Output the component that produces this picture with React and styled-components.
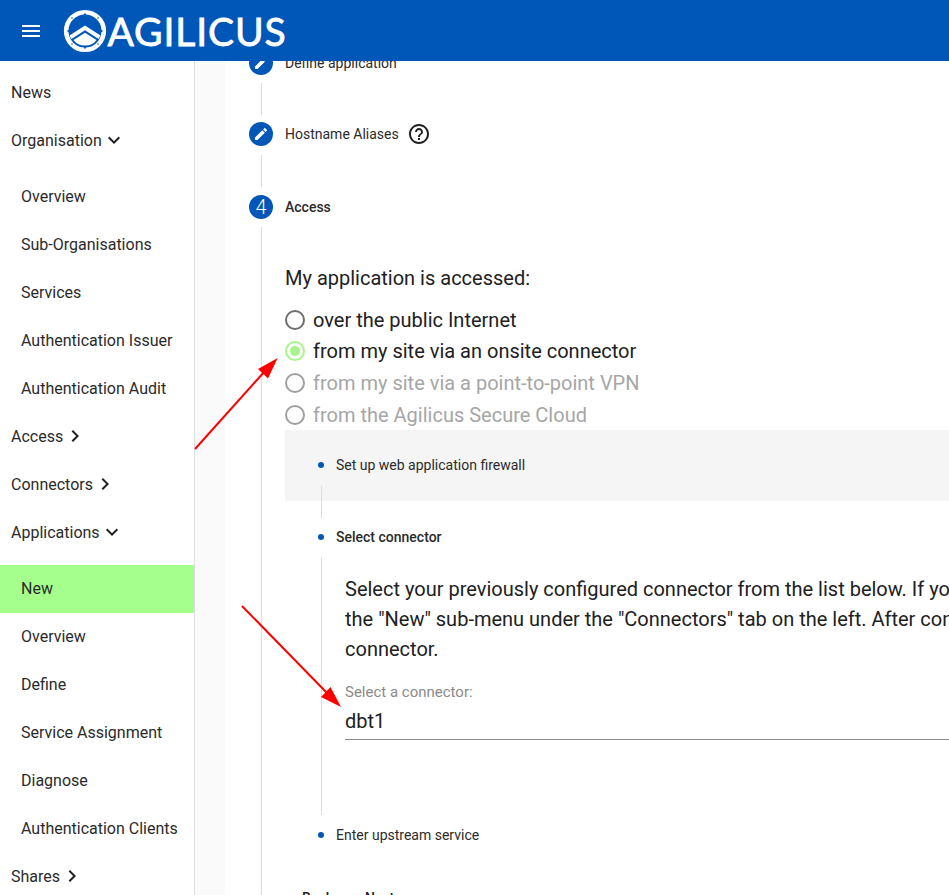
import React from 'react';
import styled, { createGlobalStyle } from 'styled-components';
import { MdMenu, MdEdit, MdHelpOutline, MdExpandMore, MdChevronRight } from 'react-icons/md';

const GlobalStyle = createGlobalStyle`
    html, body {
        margin: 0;
        padding: 0;
        height: 100%;
        overflow: hidden;
        background: #fff;
        font-family: Roboto, "Liberation Sans", sans-serif;
        color: #212121;
    }
`;

const Page = styled.div`
    position: relative;
    height: 895px;
    overflow: hidden;
    display: flex;
    flex-direction: column;
`;

const Header = styled.header`
    position: relative;
    z-index: 2;
    flex: 0 0 61px;
    display: flex;
    align-items: center;
    background: #0057b8;
    color: #fff;
    padding-left: 19px;
`;

const MenuButton = styled.div`
    display: flex;
    font-size: 24px;
    margin-right: 19.5px;
`;

const LogoMark = styled.svg`
    width: 44px;
    height: 44px;
    flex: none;
`;

const LogoText = styled.span`
    font-family: Lato, "Open Sans", sans-serif;
    font-size: 39px;
    font-weight: 400;
    letter-spacing: 0.9px;
    margin-left: 1px;
    -webkit-text-stroke: 0.8px #fff;
`;

const Body = styled.div`
    flex: 1;
    display: flex;
    min-height: 0;
`;

const Sidebar = styled.nav`
    flex: 0 0 194px;
    padding-top: 7px;
    border-right: 1px solid #ddd;
`;

const NavItem = styled.div`
    height: 48px;
    display: flex;
    align-items: center;
    padding-left: ${props => (props.$sub ? '21px' : '11px')};
    margin-top: ${props => (props.$first ? '8px' : '0')};
    font-size: 16px;
    color: #2b2b2b;
    svg {
        font-size: 24px;
        color: #212121;
    }
`;

const ActiveNavItem = styled(NavItem)`
    box-sizing: border-box;
    margin: 9px 0 -1px;
    padding-bottom: 2px;
    background: #a5ff8c;
`;

const Gutter = styled.div`
    flex: 0 0 30px;
    background: #fafafa;
`;

const Main = styled.main`
    flex: 1;
    min-width: 0;
    overflow: hidden;
    background: #fff;
`;

const Stepper = styled.div`
    margin-top: -10px;
    width: 1100px;
`;

const StepHeader = styled.div`
    display: flex;
    align-items: center;
    height: 24px;
    margin-left: 24px;
    font-size: 14px;
    font-weight: ${props => (props.$current ? 500 : 400)};
    color: #2b2b2b;
`;

const StepIcon = styled.div`
    flex: 0 0 24px;
    height: 24px;
    margin-right: 12px;
    border-radius: 50%;
    background: #0057b8;
    color: #fff;
    display: flex;
    align-items: center;
    justify-content: center;
    font-size: ${props => (props.$number ? '20px' : '16px')};
    font-weight: 300;
`;

const HelpIcon = styled(MdHelpOutline)`
    font-size: 24px;
    margin-left: 8px;
    color: #212121;
`;

const Connector = styled.div`
    width: 1px;
    height: 32px;
    background: #ddd;
    margin: ${props => props.$margin};
`;

const StepContent = styled.div`
    margin: 8px 0 0 36px;
    padding: 39px 0 0 23px;
    border-left: 1px solid #ddd;
`;

const Question = styled.div`
    font-size: 20px;
    line-height: 24px;
    margin-bottom: 14px;
`;

const RadioRow = styled.div`
    display: flex;
    align-items: center;
    height: 31.6px;
    font-size: 20px;
    color: ${props => (props.$disabled ? '#a6a6a6' : '#212121')};
`;

const RadioCircle = styled.span`
    box-sizing: border-box;
    flex: 0 0 20px;
    height: 20px;
    margin-right: 8px;
    border-radius: 50%;
    border: 2px solid ${props => (props.$checked ? '#a5f58c' : props.$disabled ? '#a0a0a0' : '#6e6e6e')};
    display: flex;
    align-items: center;
    justify-content: center;
    &::after {
        content: "";
        display: ${props => (props.$checked ? 'block' : 'none')};
        width: 10px;
        height: 10px;
        border-radius: 50%;
        background: #a5f58c;
    }
`;

const InnerHeader = styled.div`
    box-sizing: border-box;
    display: flex;
    align-items: center;
    height: ${props => props.$height};
    padding-left: 33px;
    padding-bottom: ${props => (props.$shaded ? '2px' : '0')};
    background: ${props => (props.$shaded ? '#f5f5f5' : 'transparent')};
    font-size: 14px;
    font-weight: ${props => (props.$current ? 500 : 400)};
    color: #2b2b2b;
    &::before {
        content: "";
        flex: 0 0 6px;
        height: 6px;
        margin-right: 12px;
        border-radius: 50%;
        background: #0057b8;
    }
`;

const InnerContent = styled.div`
    box-sizing: border-box;
    height: 257px;
    margin: 2px 0 0 36px;
    padding: 16px 0 0 23px;
    border-left: 1px solid #ddd;
`;

const Help = styled.p`
    margin: 0;
    font-size: 20px;
    line-height: 30px;
    white-space: nowrap;
    color: #212121;
`;

const SelectField = styled.div`
    margin-top: 19px;
    padding-bottom: 6px;
    border-bottom: 1px solid #8c8c8c;
`;

const SelectLabel = styled.div`
    font-size: 15px;
    line-height: 18px;
    color: #8a8a8a;
`;

const SelectValue = styled.div`
    margin-top: 8px;
    font-size: 20px;
    line-height: 24px;
`;

const Actions = styled.div`
    display: flex;
    margin: 25px 0 0 1px;
`;

const ActionButton = styled.div`
    height: 36px;
    line-height: 36px;
    padding: 0 16px;
    font-size: 14px;
    font-weight: 500;
    color: #212121;
`;

const Arrows = styled.svg`
    position: absolute;
    inset: 0;
    z-index: 1;
    width: 949px;
    height: 895px;
    pointer-events: none;
`;

const Logo = () => (
    <LogoMark viewBox="0 0 44 44">
        <circle cx="22" cy="22" r="18.8" fill="none" stroke="#fff" strokeWidth="4.6" />
        <path d="M3.6 22L6.6 20.6V23.4Z M40.4 22L37.4 20.6V23.4Z M22 3.6L20.6 6.6H23.4Z M22 40.4L20.6 37.4H23.4Z" fill="#0057b8" />
        <g fill="#0057b8">
            <circle cx="9" cy="9" r="0.8" />
            <circle cx="35" cy="9" r="0.8" />
            <circle cx="9" cy="35" r="0.8" />
            <circle cx="35" cy="35" r="0.8" />
        </g>
        <path d="M6.5 26.5L22 16.5L37.5 26.5L35.6 30L22 21.2L8.4 30Z" fill="#fff" />
        <path d="M10.5 31L22 23.8L33.5 31C31 34.6 26.8 36.6 22 36.6C17.2 36.6 13 34.6 10.5 31Z" fill="#fff" />
    </LogoMark>
);

const App = () => (
    <Page>
        <GlobalStyle />
        <Header>
            <MenuButton><MdMenu /></MenuButton>
            <Logo />
            <LogoText>AGILICUS</LogoText>
        </Header>
        <Body>
            <Sidebar>
                <NavItem>News</NavItem>
                <NavItem>Organisation<MdExpandMore /></NavItem>
                <NavItem $sub $first>Overview</NavItem>
                <NavItem $sub>Sub-Organisations</NavItem>
                <NavItem $sub>Services</NavItem>
                <NavItem $sub>Authentication Issuer</NavItem>
                <NavItem $sub>Authentication Audit</NavItem>
                <NavItem>Access<MdChevronRight /></NavItem>
                <NavItem>Connectors<MdChevronRight /></NavItem>
                <NavItem>Applications<MdExpandMore /></NavItem>
                <ActiveNavItem $sub>New</ActiveNavItem>
                <NavItem $sub>Overview</NavItem>
                <NavItem $sub>Define</NavItem>
                <NavItem $sub>Service Assignment</NavItem>
                <NavItem $sub>Diagnose</NavItem>
                <NavItem $sub>Authentication Clients</NavItem>
                <NavItem>Shares<MdChevronRight /></NavItem>
            </Sidebar>
            <Gutter />
            <Main>
                <Stepper>
                    <StepHeader>
                        <StepIcon><MdEdit /></StepIcon>
                        Define application
                    </StepHeader>
                    <Connector $margin="8px 0 7px 36px" />
                    <StepHeader>
                        <StepIcon><MdEdit /></StepIcon>
                        Hostname Aliases
                        <HelpIcon />
                    </StepHeader>
                    <Connector $margin="9px 0 8px 36px" />
                    <StepHeader $current>
                        <StepIcon $number>4</StepIcon>
                        Access
                    </StepHeader>
                    <StepContent>
                        <Question>My application is accessed:</Question>
                        <RadioRow><RadioCircle />over the public Internet</RadioRow>
                        <RadioRow><RadioCircle $checked />from my site via an onsite connector</RadioRow>
                        <RadioRow $disabled><RadioCircle $disabled />from my site via a point-to-point VPN</RadioRow>
                        <RadioRow $disabled><RadioCircle $disabled />from the Agilicus Secure Cloud</RadioRow>
                        <InnerHeader $shaded $height="71px">Set up web application firewall</InnerHeader>
                        <Connector $margin="-15px 0 0 36px" />
                        <InnerHeader $current $height="38px">Select connector</InnerHeader>
                        <InnerContent>
                            <Help>Select your previously configured connector from the list below. If you</Help>
                            <Help>the "New" sub-menu under the "Connectors" tab on the left. After con</Help>
                            <Help>connector.</Help>
                            <SelectField>
                                <SelectLabel>Select a connector:</SelectLabel>
                                <SelectValue>dbt1</SelectValue>
                            </SelectField>
                        </InnerContent>
                        <InnerHeader $height="40px">Enter upstream service</InnerHeader>
                        <Actions>
                            <ActionButton>Back</ActionButton>
                            <ActionButton>Next</ActionButton>
                        </Actions>
                    </StepContent>
                </Stepper>
            </Main>
        </Body>
        <Arrows viewBox="0 0 949 895">
            <line x1="195" y1="449" x2="265" y2="371" stroke="#ff0000" strokeWidth="2" />
            <polygon points="277.7,358 258,369 268,378.5" fill="#ff0000" />
            <line x1="242" y1="606" x2="328" y2="694" stroke="#ff0000" strokeWidth="2" />
            <polygon points="341,707 321,697 330.5,687" fill="#ff0000" />
        </Arrows>
    </Page>
);

export default App;
